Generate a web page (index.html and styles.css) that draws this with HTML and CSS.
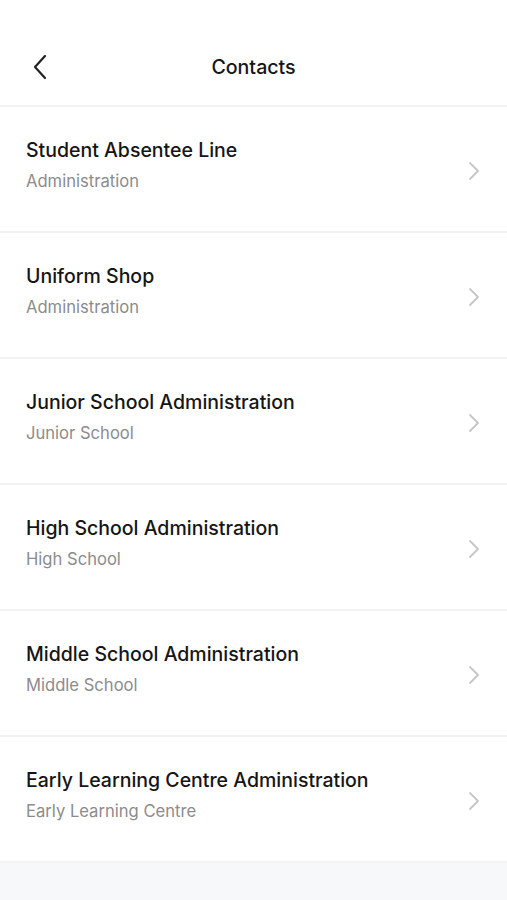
FILE: index.html
```html
<!DOCTYPE html>
<html lang="en">
<head>
  <meta charset="UTF-8" />
  <meta name="viewport" content="width=device-width, initial-scale=1.0" />
  <title>Contacts</title>
  <link rel="stylesheet" href="styles.css">
</head>
<body>
  <header class="topbar">
    <button class="back" aria-label="Back">
      <svg width="16" height="26" viewBox="0 0 16 26"><path d="M13 2 L3 13 L13 24" fill="none" stroke="#222" stroke-width="2.2" stroke-linecap="round" stroke-linejoin="round"/></svg>
    </button>
    <h1>Contacts</h1>
  </header>

  <ul class="contacts">
    <li class="contact">
      <div class="info">
        <div class="name">Student Absentee Line</div>
        <div class="dept">Administration</div>
      </div>
      <svg class="chev" width="12" height="20" viewBox="0 0 12 20"><path d="M2 2 L10 10 L2 18" fill="none" stroke="#c6c6c6" stroke-width="1.8" stroke-linecap="round" stroke-linejoin="round"/></svg>
    </li>
    <li class="contact">
      <div class="info">
        <div class="name">Uniform Shop</div>
        <div class="dept">Administration</div>
      </div>
      <svg class="chev" width="12" height="20" viewBox="0 0 12 20"><path d="M2 2 L10 10 L2 18" fill="none" stroke="#c6c6c6" stroke-width="1.8" stroke-linecap="round" stroke-linejoin="round"/></svg>
    </li>
    <li class="contact">
      <div class="info">
        <div class="name">Junior School Administration</div>
        <div class="dept">Junior School</div>
      </div>
      <svg class="chev" width="12" height="20" viewBox="0 0 12 20"><path d="M2 2 L10 10 L2 18" fill="none" stroke="#c6c6c6" stroke-width="1.8" stroke-linecap="round" stroke-linejoin="round"/></svg>
    </li>
    <li class="contact">
      <div class="info">
        <div class="name">High School Administration</div>
        <div class="dept">High School</div>
      </div>
      <svg class="chev" width="12" height="20" viewBox="0 0 12 20"><path d="M2 2 L10 10 L2 18" fill="none" stroke="#c6c6c6" stroke-width="1.8" stroke-linecap="round" stroke-linejoin="round"/></svg>
    </li>
    <li class="contact">
      <div class="info">
        <div class="name">Middle School Administration</div>
        <div class="dept">Middle School</div>
      </div>
      <svg class="chev" width="12" height="20" viewBox="0 0 12 20"><path d="M2 2 L10 10 L2 18" fill="none" stroke="#c6c6c6" stroke-width="1.8" stroke-linecap="round" stroke-linejoin="round"/></svg>
    </li>
    <li class="contact">
      <div class="info">
        <div class="name">Early Learning Centre Administration</div>
        <div class="dept">Early Learning Centre</div>
      </div>
      <svg class="chev" width="12" height="20" viewBox="0 0 12 20"><path d="M2 2 L10 10 L2 18" fill="none" stroke="#c6c6c6" stroke-width="1.8" stroke-linecap="round" stroke-linejoin="round"/></svg>
    </li>
  </ul>
</body>
</html>
```

FILE: styles.css
```css
body {
  margin: 0;
  font-family: Inter, "Noto Sans", Arial, sans-serif;
  background-color: #f7f8fa;
  color: #151515;
  min-height: 900px;
}
.topbar {
  display: flex;
  align-items: center;
  justify-content: center;
  height: 107px;
  background: #fff;
  position: relative;
  border-bottom: 2px solid #f3f3f3;
  box-sizing: border-box;
}
.topbar h1 {
  margin: 0;
  font-size: 19.6px;
  font-weight: 500;
  margin-top: 29px;
}
.back {
  position: absolute;
  left: 32px;
  top: 54px;
  background: none;
  border: none;
  padding: 0;
  cursor: pointer;
}
.contacts {
  list-style: none;
  margin: 0;
  padding: 0;
}
.contact {
  display: flex;
  align-items: center;
  justify-content: space-between;
  height: 126px;
  box-sizing: border-box;
  padding: 0 27px 8px 26px;
  background: #fff;
  border-bottom: 2px solid #f3f3f3;
  cursor: pointer;
}
.name {
  font-size: 19.5px;
  font-weight: 500;
  line-height: 24px;
}
.dept {
  font-size: 16.6px;
  color: #8c8c8c;
  line-height: 24px;
  margin-top: 7px;
}
.chev {
  margin-top: 11px;
}
```
